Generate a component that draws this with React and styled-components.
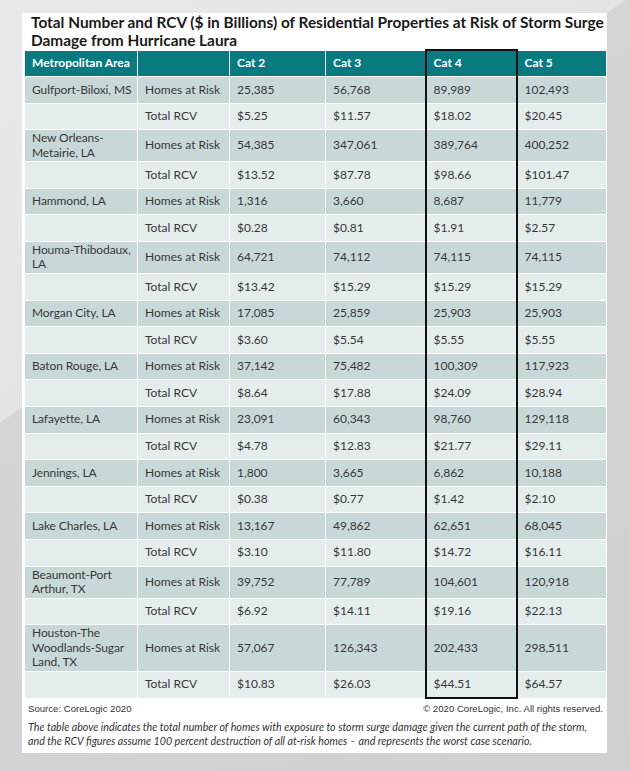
import styled, { createGlobalStyle } from 'styled-components';

const GlobalStyle = createGlobalStyle`
	html, body {
		margin: 0;
		padding: 0;
	}
	body {
		width: 630px;
		height: 771px;
		overflow: hidden;
		background:
			linear-gradient(146deg, #e9e9e9 0%, #e4e4e4 35.2%, #d5d5d5 35.4%, #d0d0d0 100%);
		font-family: Lato, 'Open Sans', sans-serif;
	}
`;

const rows = [
	['Gulfport-Biloxi, MS', ['25,385', '56,768', '89,989', '102,493'], ['$5.25', '$11.57', '$18.02', '$20.45']],
	['New Orleans-Metairie, LA', ['54,385', '347,061', '389,764', '400,252'], ['$13.52', '$87.78', '$98.66', '$101.47']],
	['Hammond, LA', ['1,316', '3,660', '8,687', '11,779'], ['$0.28', '$0.81', '$1.91', '$2.57']],
	['Houma-Thibodaux, LA', ['64,721', '74,112', '74,115', '74,115'], ['$13.42', '$15.29', '$15.29', '$15.29']],
	['Morgan City, LA', ['17,085', '25,859', '25,903', '25,903'], ['$3.60', '$5.54', '$5.55', '$5.55']],
	['Baton Rouge, LA', ['37,142', '75,482', '100,309', '117,923'], ['$8.64', '$17.88', '$24.09', '$28.94']],
	['Lafayette, LA', ['23,091', '60,343', '98,760', '129,118'], ['$4.78', '$12.83', '$21.77', '$29.11']],
	['Jennings, LA', ['1,800', '3,665', '6,862', '10,188'], ['$0.38', '$0.77', '$1.42', '$2.10']],
	['Lake Charles, LA', ['13,167', '49,862', '62,651', '68,045'], ['$3.10', '$11.80', '$14.72', '$16.11']],
	['Beaumont-Port Arthur, TX', ['39,752', '77,789', '104,601', '120,918'], ['$6.92', '$14.11', '$19.16', '$22.13']],
	['Houston-The Woodlands-Sugar Land, TX', ['57,067', '126,343', '202,433', '298,511'], ['$10.83', '$26.03', '$44.51', '$64.57']],
];

const cats = ['Cat 2', 'Cat 3', 'Cat 4', 'Cat 5'];
const BOXED = 2;

export default function App() {
	return (
		<>
			<GlobalStyle />
			<Card>
				<Title>
					Total Number and RCV ($ in Billions) of Residential Properties at Risk of Storm Surge
					<br />
					Damage from Hurricane Laura
				</Title>
				<Table>
					<colgroup>
						<col style={{ width: 113 }} />
						<col style={{ width: 92 }} />
						<col style={{ width: 96 }} />
						<col style={{ width: 100 }} />
						<col style={{ width: 91 }} />
						<col style={{ width: 90 }} />
					</colgroup>
					<thead>
						<tr>
							<HeadCell>Metropolitan Area</HeadCell>
							<HeadCell />
							{cats.map((c, i) => (
								<HeadCell key={c} $boxed={i === BOXED}>
									{c}
								</HeadCell>
							))}
						</tr>
					</thead>
					<tbody>
						{rows.map(([area, homes, rcv], r) => {
							const last = r === rows.length - 1;
							return [
								<Row key={area + 'h'} $tone="dark">
									<AreaCell>{area}</AreaCell>
									<Cell>Homes at Risk</Cell>
									{homes.map((v, i) => (
										<Cell key={i} $boxed={i === BOXED}>
											{v}
										</Cell>
									))}
								</Row>,
								<Row key={area + 'r'} $tone="light">
									<AreaCell />
									<Cell>Total RCV</Cell>
									{rcv.map((v, i) => (
										<Cell key={i} $boxed={i === BOXED} $bottom={last && i === BOXED}>
											{v}
										</Cell>
									))}
								</Row>,
							];
						})}
					</tbody>
				</Table>
				<Footer>
					<Credits>
						<span>Source: CoreLogic 2020</span>
						<span>© 2020 CoreLogic, Inc. All rights reserved.</span>
					</Credits>
					<Note>
						The table above indicates the total number of homes with exposure to storm surge damage given the current path of the storm,
						<br />
						and the RCV figures assume 100 percent destruction of all at-risk homes – and represents the worst case scenario.
					</Note>
				</Footer>
			</Card>
		</>
	);
}

const Card = styled.div`
	margin: 13px 0 0 22px;
	width: 585px;
	height: 740px;
	box-sizing: border-box;
	background: #ffffff;
	padding: 0 1px 0 2px;
`;

const Title = styled.h1`
	margin: 0;
	padding: 0 0 0 7px;
	font-family: Lato, 'Open Sans', sans-serif;
	font-size: 15.4px;
	line-height: 18px;
	font-weight: 700;
	color: #1a1a1a;
	white-space: nowrap;
`;

const Table = styled.table`
	width: 582px;
	table-layout: fixed;
	border-collapse: collapse;
	font-family: Lato, 'Open Sans', sans-serif;
	font-size: 12px;
	line-height: 14.5px;
`;

const HeadCell = styled.th`
	height: 25px;
	padding: 0 4px 0 7px;
	background: #0a7a81;
	color: #ffffff;
	font-weight: 700;
	text-align: left;
	border: 1px solid #ffffff;
	border-top: ${(p) => (p.$boxed ? '2px solid #111' : '1px solid #ffffff')};
	border-left: ${(p) => (p.$boxed ? '2px solid #111' : '1px solid #ffffff')};
	border-right: ${(p) => (p.$boxed ? '2px solid #111' : '1px solid #ffffff')};
`;

const Row = styled.tr`
	background: ${(p) => (p.$tone === 'dark' ? '#c8d8d9' : '#e5ecec')};
`;

const Cell = styled.td`
	height: 23.6px;
	padding: 1px 4px 1px 7px;
	color: #383838;
	vertical-align: middle;
	border: 1px solid #ffffff;
	border-left: ${(p) => (p.$boxed ? '2px solid #111' : '1px solid #ffffff')};
	border-right: ${(p) => (p.$boxed ? '2px solid #111' : '1px solid #ffffff')};
	border-bottom: ${(p) => (p.$bottom ? '2px solid #111' : '1px solid #ffffff')};
`;

const AreaCell = styled(Cell)`
	padding-right: 0;
	letter-spacing: -0.1px;
`;

const Footer = styled.div`
	padding: 3px 3px 0 4px;
	color: #333333;
`;

const Credits = styled.div`
	display: flex;
	justify-content: space-between;
	font-family: 'Liberation Sans', Arial, sans-serif;
	font-size: 9.6px;
	line-height: 14px;
`;

const Note = styled.p`
	margin: 4px 0 0;
	font-family: Lato, 'Open Sans', sans-serif;
	font-style: italic;
	font-size: 10.7px;
	line-height: 14px;
	white-space: nowrap;
`;
